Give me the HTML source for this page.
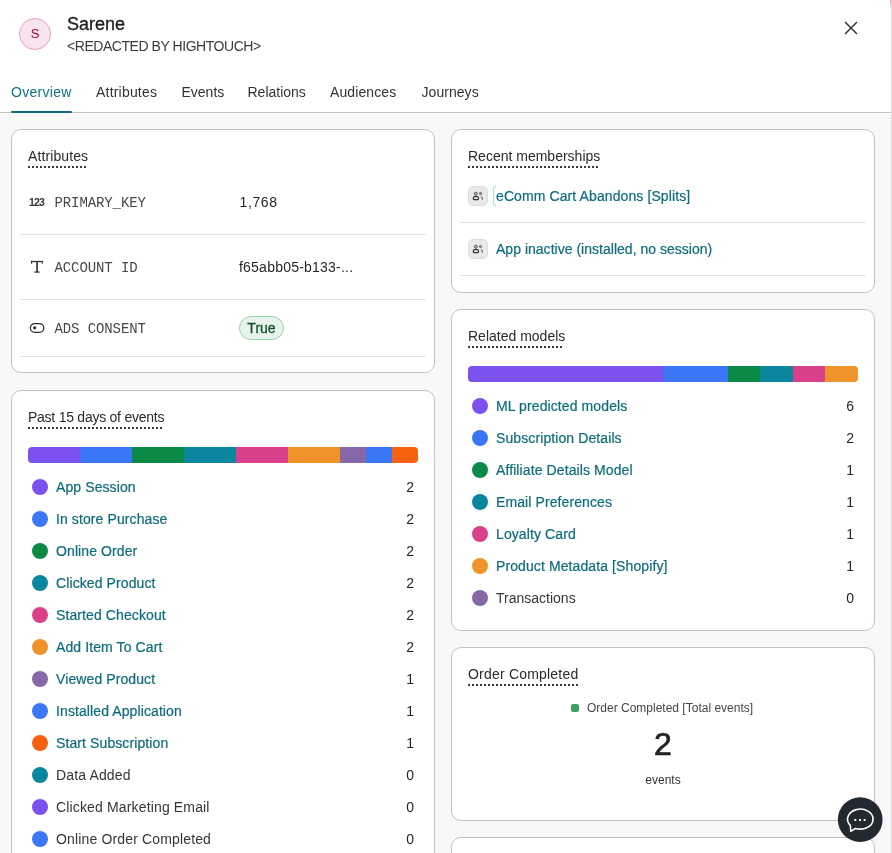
<!DOCTYPE html>
<html><head><meta charset="utf-8"><style>
html,body{margin:0;padding:0;}
body{width:892px;height:853px;overflow:hidden;position:relative;background:#f8f8f8;font-family:'Liberation Sans', sans-serif;}
.a{position:absolute;white-space:nowrap;}
.wrap{position:absolute;left:0;top:0;width:892px;height:853px;will-change:transform;}
</style></head><body><div class="wrap">
<div class="a" style="left:0px;top:0px;width:891px;height:114px;background:#fff;"></div>
<div class="a" style="left:0px;top:112px;width:891px;height:1px;background:#c7c0c0;"></div>
<div class="a" style="left:891px;top:0px;width:1px;height:853px;background:#dcdcdc;"></div>
<div class="a" style="left:890px;top:0px;width:1px;height:8px;background:linear-gradient(#f59aa2,#f9c9cd 70%,#fff);"></div>
<div class="a" style="left:19px;top:18px;width:32px;height:32px;box-sizing:border-box;border:1.2px solid #eb9fc8;border-radius:50%;background:#f8e4ef;"></div>
<div class="a" style="left:25.0px;width:20px;text-align:center;top:25px;font-size:13px;line-height:17px;color:#a8124f;font-weight:400;font-family:'Liberation Sans', sans-serif;-webkit-text-stroke:0.1px #a8124f;">S</div>
<div class="a" style="left:67px;top:13px;font-size:18px;line-height:23px;color:#1f1f1f;font-weight:400;font-family:'Liberation Sans', sans-serif;-webkit-text-stroke:0.35px #1f1f1f;">Sarene</div>
<div class="a" style="left:67px;top:37px;font-size:14px;line-height:18px;color:#3b3b3b;font-weight:400;font-family:'Liberation Sans', sans-serif;letter-spacing:-0.45px;">&lt;REDACTED BY HIGHTOUCH&gt;</div>
<svg class="a" style="left:839px;top:16px" width="24" height="24" viewBox="0 0 24 24"><path d="M6 6L18 18M18 6L6 18" stroke="#333" stroke-width="1.45" fill="none"/></svg>
<div class="a" style="left:11px;top:83px;font-size:14px;line-height:18px;color:#0f7284;font-weight:400;font-family:'Liberation Sans', sans-serif;letter-spacing:0.3px;">Overview</div>
<div class="a" style="left:96px;top:83px;font-size:14px;line-height:18px;color:#333;font-weight:400;font-family:'Liberation Sans', sans-serif;letter-spacing:0.2px;">Attributes</div>
<div class="a" style="left:181.5px;top:83px;font-size:14px;line-height:18px;color:#333;font-weight:400;font-family:'Liberation Sans', sans-serif;letter-spacing:0px;">Events</div>
<div class="a" style="left:247.5px;top:83px;font-size:14px;line-height:18px;color:#333;font-weight:400;font-family:'Liberation Sans', sans-serif;letter-spacing:0px;">Relations</div>
<div class="a" style="left:330px;top:83px;font-size:14px;line-height:18px;color:#333;font-weight:400;font-family:'Liberation Sans', sans-serif;letter-spacing:0.1px;">Audiences</div>
<div class="a" style="left:421.5px;top:83px;font-size:14px;line-height:18px;color:#333;font-weight:400;font-family:'Liberation Sans', sans-serif;letter-spacing:0.05px;">Journeys</div>
<div class="a" style="left:11px;top:111px;width:61px;height:2px;background:#0b6c7c;border-radius:1px;"></div>
<div class="a" style="left:11px;top:129px;width:424px;height:244px;box-sizing:border-box;border:1px solid #c6bfbf;border-radius:10px;background:#fff;"></div>
<div class="a" style="left:28px;top:147px;font-size:14px;line-height:18px;color:#2a2a2a;font-weight:400;font-family:'Liberation Sans', sans-serif;letter-spacing:0.1px;">Attributes</div>
<div class="a" style="left:28px;top:166px;width:58px;height:2px;background-image:linear-gradient(to right, #3a3a3a 2px, transparent 2px);background-size:4px 2px;"></div>
<div class="a" style="left:29px;top:195px;font-size:10.5px;line-height:14px;color:#333;font-weight:700;font-family:'Liberation Sans', sans-serif;letter-spacing:-0.9px;">123</div>
<div class="a" style="left:54.5px;top:194px;font-size:14px;line-height:18px;color:#484848;font-weight:400;font-family:'Liberation Mono', monospace;letter-spacing:-0.1px;">PRIMARY_KEY</div>
<div class="a" style="left:239.5px;top:193px;font-size:14px;line-height:18px;color:#262626;font-weight:400;font-family:'Liberation Sans', sans-serif;letter-spacing:0.6px;">1,768</div>
<div class="a" style="left:20px;top:234px;width:406px;height:1px;background:#e2e2e2;"></div>
<svg class="a" style="left:28px;top:258px" width="20" height="18" viewBox="0 0 20 18"><rect x="2.9" y="2.9" width="12" height="1.25" fill="#333"/><path d="M3.5 3.4L3.6 5.2M14.3 3.4L14.2 5.2" stroke="#333" stroke-width="1.2" stroke-linecap="round"/><rect x="8.15" y="3.2" width="1.8" height="11" fill="#444"/><path d="M7 14.2Q9 13.4 11 14.2" stroke="#333" stroke-width="1.3" fill="none" stroke-linecap="round"/></svg>
<div class="a" style="left:54.5px;top:259px;font-size:14px;line-height:18px;color:#484848;font-weight:400;font-family:'Liberation Mono', monospace;letter-spacing:-0.1px;">ACCOUNT ID</div>
<div class="a" style="left:239px;top:258px;font-size:14px;line-height:18px;color:#262626;font-weight:400;font-family:'Liberation Sans', sans-serif;letter-spacing:0.22px;">f65abb05-b133-...</div>
<div class="a" style="left:20px;top:299px;width:406px;height:1px;background:#e2e2e2;"></div>
<svg class="a" style="left:27px;top:318px" width="20" height="20" viewBox="0 0 20 20"><rect x="3.4" y="5.5" width="13.4" height="8.8" rx="4.4" stroke="#2b2b2b" stroke-width="1.25" fill="none"/><circle cx="7.7" cy="9.85" r="1.6" fill="#2b2b2b"/></svg>
<div class="a" style="left:54.5px;top:320px;font-size:14px;line-height:18px;color:#484848;font-weight:400;font-family:'Liberation Mono', monospace;letter-spacing:-0.1px;">ADS CONSENT</div>
<div class="a" style="left:239px;top:316px;width:45px;height:24px;box-sizing:border-box;border:1px solid #92d8a8;border-radius:12px;background:#e7f3eb;"></div>
<div class="a" style="left:239.0px;width:45px;text-align:center;top:319px;font-size:14px;line-height:18px;color:#14532d;font-weight:400;font-family:'Liberation Sans', sans-serif;-webkit-text-stroke:0.3px #14532d;">True</div>
<div class="a" style="left:20px;top:356px;width:406px;height:1px;background:#e2e2e2;"></div>
<div class="a" style="left:11px;top:390px;width:424px;height:500px;box-sizing:border-box;border:1px solid #c6bfbf;border-radius:10px;background:#fff;"></div>
<div class="a" style="left:28px;top:408px;font-size:14px;line-height:18px;color:#2a2a2a;font-weight:400;font-family:'Liberation Sans', sans-serif;letter-spacing:-0.25px;">Past 15 days of events</div>
<div class="a" style="left:28px;top:427px;width:134px;height:2px;background-image:linear-gradient(to right, #3a3a3a 2px, transparent 2px);background-size:4px 2px;"></div>
<div class="a" style="left:28px;top:447px;width:390px;height:16px;border-radius:4px;overflow:hidden;display:flex"><div style="flex:2;background:#7b51f0"></div><div style="flex:2;background:#3b76f6"></div><div style="flex:2;background:#0b8a47"></div><div style="flex:2;background:#0a879f"></div><div style="flex:2;background:#d9418a"></div><div style="flex:2;background:#f0932a"></div><div style="flex:1;background:#8667a8"></div><div style="flex:1;background:#3b76f6"></div><div style="flex:1;background:#f5620f"></div></div>
<div class="a" style="left:32px;top:479px;width:16px;height:16px;border-radius:50%;background:#7b51f0;"></div>
<div class="a" style="left:56px;top:478px;font-size:14px;line-height:18px;color:#0b6c7c;font-weight:400;font-family:'Liberation Sans', sans-serif;-webkit-text-stroke:0.2px #0b6c7c;letter-spacing:0.1px;">App Session</div>
<div class="a" style="left:384px;width:30px;text-align:right;top:478px;font-size:14px;line-height:18px;color:#262626;font-weight:400;font-family:'Liberation Sans', sans-serif;">2</div>
<div class="a" style="left:32px;top:511px;width:16px;height:16px;border-radius:50%;background:#3b76f6;"></div>
<div class="a" style="left:56px;top:510px;font-size:14px;line-height:18px;color:#0b6c7c;font-weight:400;font-family:'Liberation Sans', sans-serif;-webkit-text-stroke:0.2px #0b6c7c;letter-spacing:0.1px;">In store Purchase</div>
<div class="a" style="left:384px;width:30px;text-align:right;top:510px;font-size:14px;line-height:18px;color:#262626;font-weight:400;font-family:'Liberation Sans', sans-serif;">2</div>
<div class="a" style="left:32px;top:543px;width:16px;height:16px;border-radius:50%;background:#0b8a47;"></div>
<div class="a" style="left:56px;top:542px;font-size:14px;line-height:18px;color:#0b6c7c;font-weight:400;font-family:'Liberation Sans', sans-serif;-webkit-text-stroke:0.2px #0b6c7c;letter-spacing:0.1px;">Online Order</div>
<div class="a" style="left:384px;width:30px;text-align:right;top:542px;font-size:14px;line-height:18px;color:#262626;font-weight:400;font-family:'Liberation Sans', sans-serif;">2</div>
<div class="a" style="left:32px;top:575px;width:16px;height:16px;border-radius:50%;background:#0a879f;"></div>
<div class="a" style="left:56px;top:574px;font-size:14px;line-height:18px;color:#0b6c7c;font-weight:400;font-family:'Liberation Sans', sans-serif;-webkit-text-stroke:0.2px #0b6c7c;letter-spacing:0.1px;">Clicked Product</div>
<div class="a" style="left:384px;width:30px;text-align:right;top:574px;font-size:14px;line-height:18px;color:#262626;font-weight:400;font-family:'Liberation Sans', sans-serif;">2</div>
<div class="a" style="left:32px;top:607px;width:16px;height:16px;border-radius:50%;background:#d9418a;"></div>
<div class="a" style="left:56px;top:606px;font-size:14px;line-height:18px;color:#0b6c7c;font-weight:400;font-family:'Liberation Sans', sans-serif;-webkit-text-stroke:0.2px #0b6c7c;letter-spacing:0.1px;">Started Checkout</div>
<div class="a" style="left:384px;width:30px;text-align:right;top:606px;font-size:14px;line-height:18px;color:#262626;font-weight:400;font-family:'Liberation Sans', sans-serif;">2</div>
<div class="a" style="left:32px;top:639px;width:16px;height:16px;border-radius:50%;background:#f0932a;"></div>
<div class="a" style="left:56px;top:638px;font-size:14px;line-height:18px;color:#0b6c7c;font-weight:400;font-family:'Liberation Sans', sans-serif;-webkit-text-stroke:0.2px #0b6c7c;letter-spacing:0.1px;">Add Item To Cart</div>
<div class="a" style="left:384px;width:30px;text-align:right;top:638px;font-size:14px;line-height:18px;color:#262626;font-weight:400;font-family:'Liberation Sans', sans-serif;">2</div>
<div class="a" style="left:32px;top:671px;width:16px;height:16px;border-radius:50%;background:#8667a8;"></div>
<div class="a" style="left:56px;top:670px;font-size:14px;line-height:18px;color:#0b6c7c;font-weight:400;font-family:'Liberation Sans', sans-serif;-webkit-text-stroke:0.2px #0b6c7c;letter-spacing:0.1px;">Viewed Product</div>
<div class="a" style="left:384px;width:30px;text-align:right;top:670px;font-size:14px;line-height:18px;color:#262626;font-weight:400;font-family:'Liberation Sans', sans-serif;">1</div>
<div class="a" style="left:32px;top:703px;width:16px;height:16px;border-radius:50%;background:#3b76f6;"></div>
<div class="a" style="left:56px;top:702px;font-size:14px;line-height:18px;color:#0b6c7c;font-weight:400;font-family:'Liberation Sans', sans-serif;-webkit-text-stroke:0.2px #0b6c7c;letter-spacing:0.1px;">Installed Application</div>
<div class="a" style="left:384px;width:30px;text-align:right;top:702px;font-size:14px;line-height:18px;color:#262626;font-weight:400;font-family:'Liberation Sans', sans-serif;">1</div>
<div class="a" style="left:32px;top:735px;width:16px;height:16px;border-radius:50%;background:#f5620f;"></div>
<div class="a" style="left:56px;top:734px;font-size:14px;line-height:18px;color:#0b6c7c;font-weight:400;font-family:'Liberation Sans', sans-serif;-webkit-text-stroke:0.2px #0b6c7c;letter-spacing:0.1px;">Start Subscription</div>
<div class="a" style="left:384px;width:30px;text-align:right;top:734px;font-size:14px;line-height:18px;color:#262626;font-weight:400;font-family:'Liberation Sans', sans-serif;">1</div>
<div class="a" style="left:32px;top:767px;width:16px;height:16px;border-radius:50%;background:#0a879f;"></div>
<div class="a" style="left:56px;top:766px;font-size:14px;line-height:18px;color:#363636;font-weight:400;font-family:'Liberation Sans', sans-serif;letter-spacing:0.15px;">Data Added</div>
<div class="a" style="left:384px;width:30px;text-align:right;top:766px;font-size:14px;line-height:18px;color:#262626;font-weight:400;font-family:'Liberation Sans', sans-serif;">0</div>
<div class="a" style="left:32px;top:799px;width:16px;height:16px;border-radius:50%;background:#7b51f0;"></div>
<div class="a" style="left:56px;top:798px;font-size:14px;line-height:18px;color:#363636;font-weight:400;font-family:'Liberation Sans', sans-serif;letter-spacing:0.15px;">Clicked Marketing Email</div>
<div class="a" style="left:384px;width:30px;text-align:right;top:798px;font-size:14px;line-height:18px;color:#262626;font-weight:400;font-family:'Liberation Sans', sans-serif;">0</div>
<div class="a" style="left:32px;top:831px;width:16px;height:16px;border-radius:50%;background:#3b76f6;"></div>
<div class="a" style="left:56px;top:830px;font-size:14px;line-height:18px;color:#363636;font-weight:400;font-family:'Liberation Sans', sans-serif;letter-spacing:0.15px;">Online Order Completed</div>
<div class="a" style="left:384px;width:30px;text-align:right;top:830px;font-size:14px;line-height:18px;color:#262626;font-weight:400;font-family:'Liberation Sans', sans-serif;">0</div>
<div class="a" style="left:451px;top:129px;width:424px;height:164px;box-sizing:border-box;border:1px solid #c6bfbf;border-radius:10px;background:#fff;"></div>
<div class="a" style="left:468px;top:147px;font-size:14px;line-height:18px;color:#2a2a2a;font-weight:400;font-family:'Liberation Sans', sans-serif;letter-spacing:0px;">Recent memberships</div>
<div class="a" style="left:468px;top:166px;width:130px;height:2px;background-image:linear-gradient(to right, #3a3a3a 2px, transparent 2px);background-size:4px 2px;"></div>
<div class="a" style="left:468px;top:186px;width:20px;height:20px;box-sizing:border-box;border:1px solid #dddddd;border-radius:5px;background:#e9e9e9;"></div>
<svg class="a" style="left:468px;top:186px" width="20" height="20" viewBox="0 0 20 20"><circle cx="7.8" cy="7.7" r="1.5" stroke="#4a4a4a" stroke-width="0.9" fill="#bbb"/><path d="M5.2 12.7C5.2 9.6 10.6 9.6 10.6 12.7Q10.6 13.6 9.7 13.6H6.1Q5.2 13.6 5.2 12.7Z" stroke="#333" stroke-width="1.05" fill="none" stroke-linejoin="round"/><circle cx="12.5" cy="7.5" r="1.1" stroke="#4a4a4a" stroke-width="0.8" fill="#999"/><path d="M12.8 10.3Q14.9 11.3 14.3 13.7" stroke="#4a4a4a" stroke-width="1" fill="none"/></svg>
<div class="a" style="left:493px;top:186px;width:3px;height:20px;box-sizing:border-box;border:1px solid #a3dbe8;border-right:none;border-radius:3px 0 0 3px;"></div>
<div class="a" style="left:496px;top:187px;font-size:14px;line-height:18px;color:#0b6c7c;font-weight:400;font-family:'Liberation Sans', sans-serif;-webkit-text-stroke:0.2px #0b6c7c;letter-spacing:0.1px;">eComm Cart Abandons [Splits]</div>
<div class="a" style="left:460px;top:222px;width:406px;height:1px;background:#e2e2e2;"></div>
<div class="a" style="left:468px;top:239px;width:20px;height:20px;box-sizing:border-box;border:1px solid #dddddd;border-radius:5px;background:#e9e9e9;"></div>
<svg class="a" style="left:468px;top:239px" width="20" height="20" viewBox="0 0 20 20"><circle cx="7.8" cy="7.7" r="1.5" stroke="#4a4a4a" stroke-width="0.9" fill="#bbb"/><path d="M5.2 12.7C5.2 9.6 10.6 9.6 10.6 12.7Q10.6 13.6 9.7 13.6H6.1Q5.2 13.6 5.2 12.7Z" stroke="#333" stroke-width="1.05" fill="none" stroke-linejoin="round"/><circle cx="12.5" cy="7.5" r="1.1" stroke="#4a4a4a" stroke-width="0.8" fill="#999"/><path d="M12.8 10.3Q14.9 11.3 14.3 13.7" stroke="#4a4a4a" stroke-width="1" fill="none"/></svg>
<div class="a" style="left:496px;top:240px;font-size:14px;line-height:18px;color:#0b6c7c;font-weight:400;font-family:'Liberation Sans', sans-serif;-webkit-text-stroke:0.2px #0b6c7c;letter-spacing:0.1px;letter-spacing:0.02px;">App inactive (installed, no session)</div>
<div class="a" style="left:460px;top:275px;width:406px;height:1px;background:#e2e2e2;"></div>
<div class="a" style="left:451px;top:309px;width:424px;height:322px;box-sizing:border-box;border:1px solid #c6bfbf;border-radius:10px;background:#fff;"></div>
<div class="a" style="left:468px;top:327px;font-size:14px;line-height:18px;color:#2a2a2a;font-weight:400;font-family:'Liberation Sans', sans-serif;letter-spacing:0px;">Related models</div>
<div class="a" style="left:468px;top:346px;width:94px;height:2px;background-image:linear-gradient(to right, #3a3a3a 2px, transparent 2px);background-size:4px 2px;"></div>
<div class="a" style="left:468px;top:366px;width:390px;height:16px;border-radius:4px;overflow:hidden;"><div style="position:absolute;top:0;height:16px;left:0px;width:195px;background:#7b51f0"></div><div style="position:absolute;top:0;height:16px;left:195px;width:65px;background:#3b76f6"></div><div style="position:absolute;top:0;height:16px;left:260px;width:32px;background:#0b8a47"></div><div style="position:absolute;top:0;height:16px;left:292px;width:33px;background:#0a879f"></div><div style="position:absolute;top:0;height:16px;left:325px;width:32px;background:#d9418a"></div><div style="position:absolute;top:0;height:16px;left:357px;width:33px;background:#f0932a"></div></div>
<div class="a" style="left:472px;top:398px;width:16px;height:16px;border-radius:50%;background:#7b51f0;"></div>
<div class="a" style="left:496px;top:397px;font-size:14px;line-height:18px;color:#0b6c7c;font-weight:400;font-family:'Liberation Sans', sans-serif;-webkit-text-stroke:0.2px #0b6c7c;letter-spacing:0.1px;">ML predicted models</div>
<div class="a" style="left:824px;width:30px;text-align:right;top:397px;font-size:14px;line-height:18px;color:#262626;font-weight:400;font-family:'Liberation Sans', sans-serif;">6</div>
<div class="a" style="left:472px;top:430px;width:16px;height:16px;border-radius:50%;background:#3b76f6;"></div>
<div class="a" style="left:496px;top:429px;font-size:14px;line-height:18px;color:#0b6c7c;font-weight:400;font-family:'Liberation Sans', sans-serif;-webkit-text-stroke:0.2px #0b6c7c;letter-spacing:0.1px;">Subscription Details</div>
<div class="a" style="left:824px;width:30px;text-align:right;top:429px;font-size:14px;line-height:18px;color:#262626;font-weight:400;font-family:'Liberation Sans', sans-serif;">2</div>
<div class="a" style="left:472px;top:462px;width:16px;height:16px;border-radius:50%;background:#0b8a47;"></div>
<div class="a" style="left:496px;top:461px;font-size:14px;line-height:18px;color:#0b6c7c;font-weight:400;font-family:'Liberation Sans', sans-serif;-webkit-text-stroke:0.2px #0b6c7c;letter-spacing:0.1px;">Affiliate Details Model</div>
<div class="a" style="left:824px;width:30px;text-align:right;top:461px;font-size:14px;line-height:18px;color:#262626;font-weight:400;font-family:'Liberation Sans', sans-serif;">1</div>
<div class="a" style="left:472px;top:494px;width:16px;height:16px;border-radius:50%;background:#0a879f;"></div>
<div class="a" style="left:496px;top:493px;font-size:14px;line-height:18px;color:#0b6c7c;font-weight:400;font-family:'Liberation Sans', sans-serif;-webkit-text-stroke:0.2px #0b6c7c;letter-spacing:0.1px;">Email Preferences</div>
<div class="a" style="left:824px;width:30px;text-align:right;top:493px;font-size:14px;line-height:18px;color:#262626;font-weight:400;font-family:'Liberation Sans', sans-serif;">1</div>
<div class="a" style="left:472px;top:526px;width:16px;height:16px;border-radius:50%;background:#d9418a;"></div>
<div class="a" style="left:496px;top:525px;font-size:14px;line-height:18px;color:#0b6c7c;font-weight:400;font-family:'Liberation Sans', sans-serif;-webkit-text-stroke:0.2px #0b6c7c;letter-spacing:0.1px;">Loyalty Card</div>
<div class="a" style="left:824px;width:30px;text-align:right;top:525px;font-size:14px;line-height:18px;color:#262626;font-weight:400;font-family:'Liberation Sans', sans-serif;">1</div>
<div class="a" style="left:472px;top:558px;width:16px;height:16px;border-radius:50%;background:#f0932a;"></div>
<div class="a" style="left:496px;top:557px;font-size:14px;line-height:18px;color:#0b6c7c;font-weight:400;font-family:'Liberation Sans', sans-serif;-webkit-text-stroke:0.2px #0b6c7c;letter-spacing:0.1px;">Product Metadata [Shopify]</div>
<div class="a" style="left:824px;width:30px;text-align:right;top:557px;font-size:14px;line-height:18px;color:#262626;font-weight:400;font-family:'Liberation Sans', sans-serif;">1</div>
<div class="a" style="left:472px;top:590px;width:16px;height:16px;border-radius:50%;background:#8667a8;"></div>
<div class="a" style="left:496px;top:589px;font-size:14px;line-height:18px;color:#363636;font-weight:400;font-family:'Liberation Sans', sans-serif;">Transactions</div>
<div class="a" style="left:824px;width:30px;text-align:right;top:589px;font-size:14px;line-height:18px;color:#262626;font-weight:400;font-family:'Liberation Sans', sans-serif;">0</div>
<div class="a" style="left:451px;top:647px;width:424px;height:174px;box-sizing:border-box;border:1px solid #c6bfbf;border-radius:10px;background:#fff;"></div>
<div class="a" style="left:468px;top:665px;font-size:14px;line-height:18px;color:#2a2a2a;font-weight:400;font-family:'Liberation Sans', sans-serif;letter-spacing:0.2px;">Order Completed</div>
<div class="a" style="left:468px;top:684px;width:110px;height:2px;background-image:linear-gradient(to right, #3a3a3a 2px, transparent 2px);background-size:4px 2px;"></div>
<div class="a" style="left:571px;top:704px;width:8px;height:8px;border-radius:2px;background:#3ba35f;"></div>
<div class="a" style="left:587px;top:700px;font-size:12px;line-height:16px;color:#444;font-weight:400;font-family:'Liberation Sans', sans-serif;">Order Completed [Total events]</div>
<div class="a" style="left:633.0px;width:60px;text-align:center;top:723px;font-size:32px;line-height:42px;color:#222;font-weight:400;font-family:'Liberation Sans', sans-serif;-webkit-text-stroke:0.7px #222;">2</div>
<div class="a" style="left:623.0px;width:80px;text-align:center;top:772px;font-size:12px;line-height:16px;color:#333;font-weight:400;font-family:'Liberation Sans', sans-serif;">events</div>
<div class="a" style="left:451px;top:837px;width:424px;height:100px;box-sizing:border-box;border:1px solid #c6bfbf;border-radius:10px;background:#fff;"></div>
<svg class="a" style="left:832px;top:792px" width="56" height="56" viewBox="0 0 56 56"><circle cx="28.2" cy="27.6" r="22.4" fill="#222931"/><path d="M23.6 36.4A12.75 10 0 1 0 18.3 33.3L18.8 39.2L23.6 36.4Z" stroke="#fff" stroke-width="1.6" fill="none" stroke-linejoin="round"/><rect x="22.3" y="27" width="2" height="2" rx=".5" fill="#fff"/><rect x="27" y="27" width="2" height="2" rx=".5" fill="#fff"/><rect x="31.6" y="27" width="2" height="2" rx=".5" fill="#fff"/></svg>
</div></body></html>
